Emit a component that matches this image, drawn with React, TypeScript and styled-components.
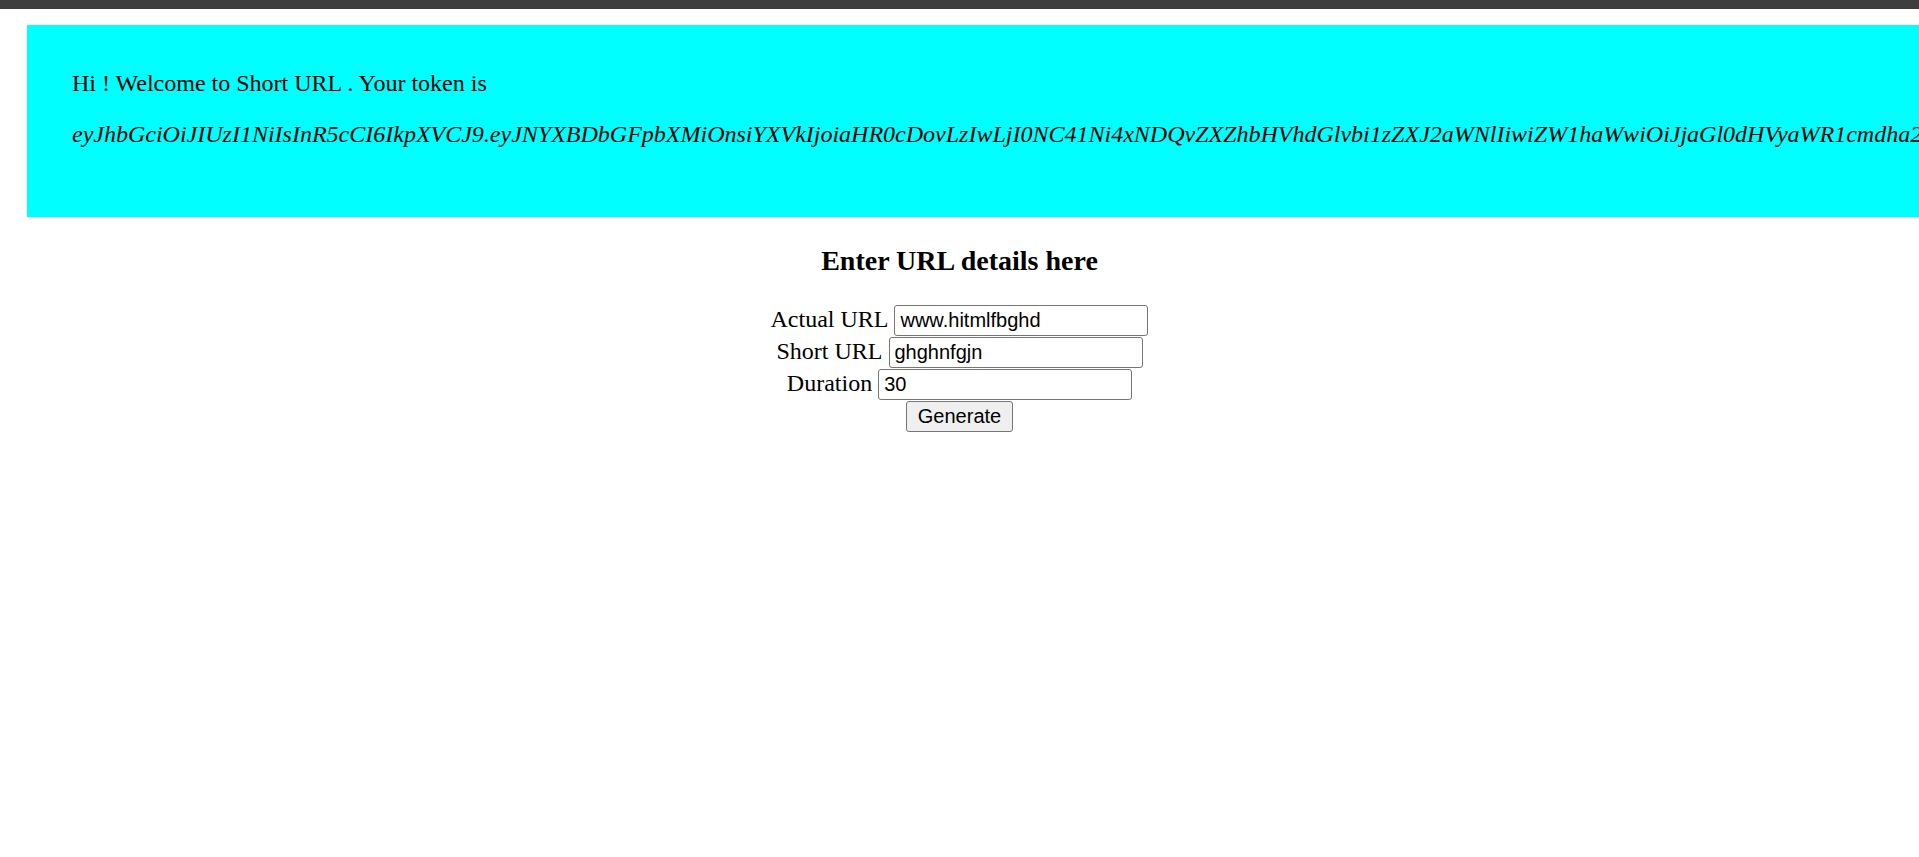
import React from "react";
import styled, { createGlobalStyle } from "styled-components";

const GlobalStyle = createGlobalStyle`
  html, body {
    margin: 0;
    padding: 0;
    overflow: hidden;
    background: #ffffff;
  }
  body {
    font-family: "Liberation Serif", "Times New Roman", serif;
    color: #000000;
  }
`;

const TopBar = styled.div`
  height: 9px;
  background: #3e3e3e;
`;

const Page = styled.main`
  padding-top: 16px;
`;

const Banner = styled.section`
  margin-left: 27px;
  width: max-content;
  background: #00ffff;
  padding: 45px;
  font-size: 24px;
  line-height: 27px;
`;

const Greeting = styled.div``;

const Token = styled.p`
  margin: 24px 0;
  font-style: italic;
  white-space: nowrap;
`;

const Heading = styled.h3`
  margin: 28px 0 29px;
  text-align: center;
  font-size: 28px;
  font-weight: bold;
  line-height: 31px;
`;

const Form = styled.form`
  display: flex;
  flex-direction: column;
  align-items: center;
`;

const Row = styled.div`
  display: flex;
  align-items: baseline;
  gap: 6px;
  height: 32px;
  font-size: 24px;
`;

const Label = styled.label`
  line-height: 27px;
`;

const Input = styled.input`
  box-sizing: border-box;
  width: 254px;
  height: 31px;
  padding: 0 5px;
  border: 1px solid #767676;
  border-radius: 3px;
  font-family: "Liberation Sans", Arial, sans-serif;
  font-size: 20px;
  color: #000000;
  background: #ffffff;
  outline: none;
`;

const Button = styled.button`
  box-sizing: border-box;
  height: 31px;
  padding: 0 11px;
  border: 1px solid #767676;
  border-radius: 3px;
  background: #efefef;
  font-family: "Liberation Sans", Arial, sans-serif;
  font-size: 20px;
  color: #000000;
`;

const TOKEN =
  "eyJhbGciOiJIUzI1NiIsInR5cCI6IkpXVCJ9.eyJNYXBDbGFpbXMiOnsiYXVkIjoiaHR0cDovLzIwLjI0NC41Ni4xNDQvZXZhbHVhdGlvbi1zZXJ2aWNlIiwiZW1haWwiOiJjaGl0dHVyaWR1cmdha2FsYWt1bWFyQGdtYWlsLmNvbSIsImV4cCI6MTcxMDk5MDAwMH19";

const fields = [
  { id: "actual", label: "Actual URL", value: "www.hitmlfbghd" },
  { id: "short", label: "Short URL", value: "ghghnfgjn" },
  { id: "duration", label: "Duration", value: "30" },
];

export default function App() {
  return (
    <>
      <GlobalStyle />
      <TopBar />
      <Page>
        <Banner>
          <Greeting>Hi ! Welcome to Short URL . Your token is</Greeting>
          <Token>{TOKEN}</Token>
        </Banner>
        <Heading>Enter URL details here</Heading>
        <Form onSubmit={(e) => e.preventDefault()}>
          {fields.map((f) => (
            <Row key={f.id}>
              <Label htmlFor={f.id}>{f.label}</Label>
              <Input id={f.id} type="text" defaultValue={f.value} />
            </Row>
          ))}
          <Row>
            <Button type="submit">Generate</Button>
          </Row>
        </Form>
      </Page>
    </>
  );
}
